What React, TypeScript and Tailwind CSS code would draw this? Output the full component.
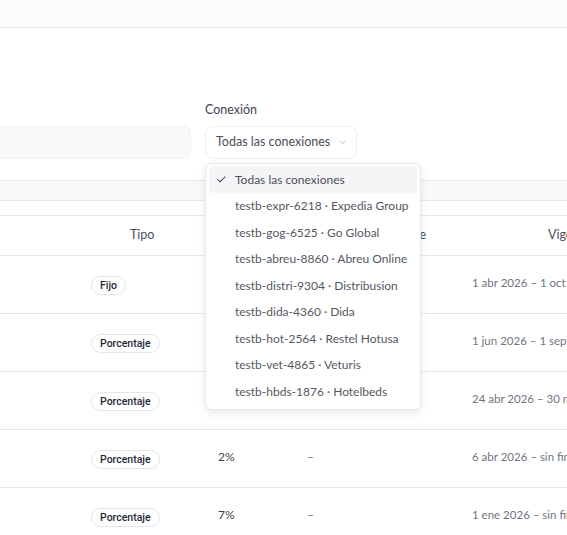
import { Check, ChevronDown } from "lucide-react";

type Fila = {
  id: number;
  tipo: string;
  valor: string;
  tope: string;
  vigencia: string;
};

const conexiones = [
  "testb-expr-6218 · Expedia Group",
  "testb-gog-6525 · Go Global",
  "testb-abreu-8860 · Abreu Online",
  "testb-distri-9304 · Distribusion",
  "testb-dida-4360 · Dida",
  "testb-hot-2564 · Restel Hotusa",
  "testb-vet-4865 · Veturis",
  "testb-hbds-1876 · Hotelbeds",
];

const filas: Fila[] = [
  { id: 1, tipo: "Fijo", valor: "12 €", tope: "–", vigencia: "1 abr 2026 – 1 oct 2026" },
  { id: 2, tipo: "Porcentaje", valor: "5%", tope: "–", vigencia: "1 jun 2026 – 1 sept 2026" },
  { id: 3, tipo: "Porcentaje", valor: "3%", tope: "–", vigencia: "24 abr 2026 – 30 may 2026" },
  { id: 4, tipo: "Porcentaje", valor: "2%", tope: "–", vigencia: "6 abr 2026 – sin fin" },
  { id: 5, tipo: "Porcentaje", valor: "7%", tope: "–", vigencia: "1 ene 2026 – sin fin" },
];

export default function App() {
  return (
    <div className="min-h-screen bg-white overflow-hidden font-['Lato',sans-serif] text-[#374151]">
      <div className="h-[28px] bg-[#fcfcfc] border-b border-[#e2e6ee]" />

      {/* filtros */}
      <div className="flex items-end gap-[14px] pt-[73px]">
        <div className="w-[191px] h-[33px] bg-[#f8f9fa] border border-[#f1f2f4] border-l-0 rounded-r-lg" />
        <div className="relative">
          <label className="block text-[12.5px] leading-[18px] mb-[7px] text-[#3f4451]">
            Conexión
          </label>
          <button className="h-[33px] w-[152px] flex items-center gap-[8px] pl-[10px] bg-white border border-[#eceef2] rounded-lg text-[12.5px] text-[#4b4f5a]">
            Todas las conexiones
            <ChevronDown size={9} strokeWidth={2} className="text-[#9ca3af]" />
          </button>

          <div className="absolute left-0 top-[calc(100%+4px)] z-10 w-[216px] bg-white border border-[#e6e8ec] rounded-md shadow-[0_3px_8px_rgba(0,0,0,0.09)] px-[3px] pt-[2px] pb-[4px]">
            <div className="h-[27px] flex items-center rounded bg-[#f5f5f7] text-[12px] text-[#4b4f5a]">
              <span className="w-[26px] flex pl-[7px]">
                <Check size={11} strokeWidth={2.2} className="text-[#374151]" />
              </span>
              <span>Todas las conexiones</span>
            </div>
            {conexiones.map((c) => (
              <div
                key={c}
                className="h-[26.5px] flex items-center pl-[26px] text-[12px] text-[#55585f] whitespace-nowrap"
              >
                {c}
              </div>
            ))}
          </div>
        </div>
      </div>

      <div className="mt-[21px] h-[21px] bg-[#fafafb] border-y border-[#e3e7ee]" />

      {/* tabla */}
      <div className="mt-[14px] border-t border-[#e3e7ee] w-[700px]">
        <div className="grid grid-cols-[91px_109px_90px_160px_1fr] h-[40px] items-center border-b border-[#e3e7ee] text-[12.5px] text-[#4b4f5a]">
          <div />
          <div className="pl-[39px]">Tipo</div>
          <div className="pl-[18px]">Valor</div>
          <div className="text-right pr-[24px]">Tope aplicable</div>
          <div className="pl-[98px]">Vigencia</div>
        </div>
        {filas.map((f) => (
          <div
            key={f.id}
            className="grid grid-cols-[91px_109px_90px_160px_1fr] h-[58px] items-center border-b border-[#e3e7ee] pb-[3px]"
          >
            <div />
            <div>
              <span className="inline-flex items-center h-[19px] px-[8px] rounded-full border border-[#e3e6ec] bg-white font-['Roboto',sans-serif] text-[10.5px] font-medium text-[#1f2937]">
                {f.tipo}
              </span>
            </div>
            <div className="pl-[18px] text-[12px] text-[#3a3f4a]">{f.valor}</div>
            <div className="pl-[17px] text-[12px] text-[#6b7280]">{f.tope}</div>
            <div className="pl-[22px] text-[11.5px] text-[#70757f] whitespace-nowrap">
              {f.vigencia}
            </div>
          </div>
        ))}
      </div>
    </div>
  );
}
